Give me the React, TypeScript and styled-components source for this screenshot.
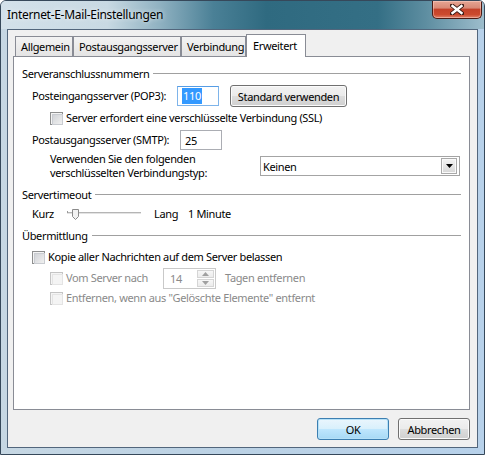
import React from "react";
import styled, { createGlobalStyle } from "styled-components";

const Global = createGlobalStyle`
  html, body { margin: 0; padding: 0; background: #ffffff; }
  body {
    font-family: "Noto Sans", "Liberation Sans", sans-serif;
    font-size: 11px;
    letter-spacing: -0.35px;
    color: #000;
  }
  * { box-sizing: border-box; }
`;

const Window = styled.div`
  width: 485px;
  height: 455px;
  border: 1px solid #36485a;
  border-radius: 6px 6px 0 0;
  overflow: hidden;
  display: flex;
  flex-direction: column;
  background: linear-gradient(to right, #c6d7e3 0%, #bcd2e4 40%, #b7d1ea 100%);
`;

const TitleBar = styled.div`
  height: 28px;
  flex: none;
  display: flex;
  align-items: flex-start;
  justify-content: space-between;
  background: linear-gradient(
    to right,
    #d3e1ea 0%,
    #c8d9e3 22%,
    #8fb1c1 33%,
    #4a8096 44%,
    #2f6a80 55%,
    #346f85 78%,
    #5e8ea1 88%,
    #9dbdcc 100%
  );
`;

const Title = styled.div`
  font-size: 12px;
  line-height: 16px;
  padding: 6px 0 0 6px;
  letter-spacing: -0.3px;
  text-shadow: 0 0 5px rgba(255, 255, 255, 0.9);
`;

const CloseButton = styled.div`
  width: 50px;
  height: 18px;
  margin-right: 2px;
  border: 1px solid #4c1b14;
  border-top: none;
  border-radius: 0 0 5px 5px;
  background: linear-gradient(#e6a593 0%, #d98a77 40%, #c4422a 50%, #cc4a2e 80%, #e0836c 100%);
  box-shadow: inset 0 0 0 1px rgba(255, 220, 210, 0.45);
  display: flex;
  align-items: center;
  justify-content: center;
`;

const FrameBody = styled.div`
  flex: 1;
  display: flex;
  padding: 0 6px 6px 6px;
`;

const Client = styled.div`
  flex: 1;
  display: flex;
  flex-direction: column;
  background: #f0f0f0;
  border: 1px solid #52667c;
  padding: 4px 7px 0 5px;
`;

const TabStrip = styled.div`
  height: 22px;
  display: flex;
  align-items: flex-end;
  padding-left: 2px;
`;

const Tab = styled.div<{ $w: number; $active?: boolean }>`
  width: ${(p) => p.$w}px;
  height: ${(p) => (p.$active ? 23 : 20)}px;
  margin-bottom: ${(p) => (p.$active ? -1 : 0)}px;
  position: relative;
  z-index: ${(p) => (p.$active ? 2 : 0)};
  border: 1px solid #898c95;
  border-bottom: none;
  background: ${(p) => (p.$active ? "#ffffff" : "linear-gradient(#f3f3f3, #e4e4e4)")};
  display: flex;
  align-items: ${(p) => (p.$active ? "flex-start" : "center")};
  padding: ${(p) => (p.$active ? "3px 0 0 6px" : "0 0 0 5px")};
  white-space: nowrap;
`;

const Panel = styled.div`
  height: 354px;
  flex: none;
  background: #ffffff;
  border: 1px solid #898c95;
  padding: 8px 8px 0 8px;
  display: flex;
  flex-direction: column;
  position: relative;
  z-index: 1;
`;

const GroupHeader = styled.div<{ $mt?: number }>`
  height: 16px;
  margin-top: ${(p) => p.$mt ?? 0}px;
  display: flex;
  align-items: center;
  gap: 4px;
  white-space: nowrap;
  &::after {
    content: "";
    flex: 1;
    border-top: 1px solid #a0a0a0;
    margin-top: 1px;
  }
`;

const Row = styled.div<{ $h: number; $indent: number; $mt?: number; $dim?: boolean }>`
  height: ${(p) => p.$h}px;
  margin-top: ${(p) => p.$mt ?? 0}px;
  padding-left: ${(p) => p.$indent}px;
  display: flex;
  align-items: center;
  white-space: nowrap;
  color: ${(p) => (p.$dim ? "#8a8a8a" : "#000")};
`;

const Label = styled.span<{ $w?: number; $ml?: number }>`
  width: ${(p) => (p.$w ? `${p.$w}px` : "auto")};
  flex: none;
  margin-left: ${(p) => p.$ml ?? 0}px;
  line-height: 14px;
`;

const TextBox = styled.div<{ $focus?: boolean }>`
  width: 42px;
  height: 20px;
  flex: none;
  border: 1px solid ${(p) => (p.$focus ? "#7eb4ea" : "#abadb3")};
  border-top-color: ${(p) => (p.$focus ? "#569de5" : "#abadb3")};
  background: #fff;
  display: flex;
  align-items: center;
  padding-left: 4px;
`;

const Selected = styled.span`
  background: #3399ff;
  color: #fff;
  padding: 1px 1px 1px 1px;
  line-height: 14px;
`;

const PushButton = styled.div<{ $w: number; $default?: boolean; $ml?: number }>`
  width: ${(p) => p.$w}px;
  height: 22px;
  flex: none;
  margin-left: ${(p) => p.$ml ?? 0}px;
  border: 1px solid ${(p) => (p.$default ? "#3c7fb1" : "#707070")};
  border-radius: 3px;
  background: ${(p) =>
    p.$default
      ? "linear-gradient(#eaf6fd 0%, #d9f0fc 48%, #bee6fd 52%, #a7d9f5 100%)"
      : "linear-gradient(#f2f2f2 0%, #ebebeb 48%, #dddddd 52%, #cfcfcf 100%)"};
  box-shadow: inset 0 0 0 1px ${(p) => (p.$default ? "#b5e1f8" : "#fbfbfb")};
  display: flex;
  align-items: center;
  justify-content: center;
`;

const Check = styled.span<{ $disabled?: boolean }>`
  width: 13px;
  height: 13px;
  flex: none;
  border: 1px solid ${(p) => (p.$disabled ? "#c4c4c4" : "#8e8f8f")};
  background: #f4f4f4;
  padding: 2px;
  display: inline-block;
  &::before {
    content: "";
    display: block;
    border: 1px solid ${(p) => (p.$disabled ? "#e4e4e4" : "#c9ccd1")};
    background: ${(p) =>
      p.$disabled ? "#f4f4f4" : "linear-gradient(135deg, #d2d4d8 0%, #f0f0f0 100%)"};
    margin: -1px;
    width: 9px;
    height: 9px;
  }
`;

const CheckRow = styled(Row)`
  gap: 3px;
`;

const Select = styled.div`
  width: 200px;
  height: 20px;
  flex: none;
  border: 1px solid #a4a4a4;
  background: #fff;
  display: flex;
  align-items: center;
  justify-content: space-between;
  padding: 0 2px 0 2px;
`;

const DropButton = styled.div`
  width: 16px;
  height: 16px;
  border: 1px solid #a9a9a9;
  background: linear-gradient(#f4f4f4 0%, #e6e6e6 50%, #d6d6d6 100%);
  box-shadow: inset 0 0 0 1px #fafafa;
  display: flex;
  align-items: center;
  justify-content: center;
`;

const SpinBox = styled.div`
  width: 53px;
  height: 21px;
  flex: none;
  border: 1px solid #c9c9c9;
  background: #fff;
  display: flex;
  align-items: center;
  justify-content: space-between;
  padding: 1px 1px 1px 6px;
  color: #8a8a8a;
`;

const SpinButtons = styled.div`
  width: 17px;
  height: 100%;
  display: flex;
  flex-direction: column;
  gap: 1px;
`;

const SpinPart = styled.div`
  flex: 1;
  border: 1px solid #d5d5d5;
  background: linear-gradient(#f7f7f7, #ececec);
  display: flex;
  align-items: center;
  justify-content: center;
`;

const SliderBox = styled.svg`
  flex: none;
  display: block;
`;

const ButtonRow = styled.div`
  display: flex;
  justify-content: flex-end;
  gap: 9px;
  margin-top: 8px;
`;

const Arrow = ({ up, color = "#000" }: { up?: boolean; color?: string }) => (
  <svg width="7" height="4" viewBox="0 0 7 4">
    <path d={up ? "M3.5 0 L7 4 L0 4 Z" : "M0 0 L7 0 L3.5 4 Z"} fill={color} />
  </svg>
);

export default function App() {
  return (
    <>
      <Global />
      <Window>
        <TitleBar>
          <Title>Internet-E-Mail-Einstellungen</Title>
          <CloseButton>
            <svg width="14" height="11" viewBox="0 0 14 11">
              <path
                d="M2 1.5 L12 9.5 M12 1.5 L2 9.5"
                stroke="#3a1a14"
                strokeWidth="4.2"
                strokeLinecap="square"
              />
              <path
                d="M2.5 2 L11.5 9 M11.5 2 L2.5 9"
                stroke="#ffffff"
                strokeWidth="2.4"
                strokeLinecap="square"
              />
            </svg>
          </CloseButton>
        </TitleBar>
        <FrameBody>
          <Client>
            <TabStrip>
              <Tab $w={58}>Allgemein</Tab>
              <Tab $w={108}>Postausgangsserver</Tab>
              <Tab $w={65}>Verbindung</Tab>
              <Tab $w={60} $active>
                Erweitert
              </Tab>
            </TabStrip>
            <Panel>
              <GroupHeader>Serveranschlussnummern</GroupHeader>
              <Row $h={22} $indent={10} $mt={4}>
                <Label $w={145}>Posteingangsserver (POP3):</Label>
                <TextBox $focus>
                  <Selected>110</Selected>
                </TextBox>
                <PushButton $w={117} $ml={11}>
                  Standard verwenden
                </PushButton>
              </Row>
              <CheckRow $h={22} $indent={28}>
                <Check />
                <Label>Server erfordert eine verschlüsselte Verbindung (SSL)</Label>
              </CheckRow>
              <Row $h={22} $indent={10}>
                <Label $w={148}>Postausgangsserver (SMTP):</Label>
                <TextBox>25</TextBox>
              </Row>
              <Row $h={28} $indent={28} $mt={1}>
                <Label $w={210}>
                  Verwenden Sie den folgenden
                  <br />
                  verschlüsselten Verbindungstyp:
                </Label>
                <Select>
                  <span>Keinen</span>
                  <DropButton>
                    <Arrow />
                  </DropButton>
                </Select>
              </Row>
              <GroupHeader $mt={6}>Servertimeout</GroupHeader>
              <Row $h={22} $indent={10} $mt={1}>
                <Label $w={35}>Kurz</Label>
                <SliderBox width="74" height="22" viewBox="0 0 74 22">
                  <rect x="0" y="9" width="74" height="1" fill="#b5b5b5" />
                  <rect x="0" y="10" width="74" height="1" fill="#e3e3e3" />
                  <path d="M0.5 8 L0.5 10" stroke="#9a9a9a" />
                  <path
                    d="M5.5 6.5 L11.5 6.5 L11.5 13.5 L8.5 16.5 L5.5 13.5 Z"
                    fill="#f2f2f2"
                    stroke="#8a8a8a"
                  />
                </SliderBox>
                <Label $w={34} $ml={13}>
                  Lang
                </Label>
                <Label>1 Minute</Label>
              </Row>
              <GroupHeader $mt={2}>Übermittlung</GroupHeader>
              <CheckRow $h={22} $indent={10} $mt={3}>
                <Check />
                <Label>Kopie aller Nachrichten auf dem Server belassen</Label>
              </CheckRow>
              <CheckRow $h={20} $indent={28} $dim>
                <Check $disabled />
                <Label $w={94}>Vom Server nach</Label>
                <SpinBox>
                  <span>14</span>
                  <SpinButtons>
                    <SpinPart>
                      <Arrow up color="#a0a0a0" />
                    </SpinPart>
                    <SpinPart>
                      <Arrow color="#a0a0a0" />
                    </SpinPart>
                  </SpinButtons>
                </SpinBox>
                <Label $ml={6}>Tagen entfernen</Label>
              </CheckRow>
              <CheckRow $h={20} $indent={28} $dim>
                <Check $disabled />
                <Label>Entfernen, wenn aus "Gelöschte Elemente" entfernt</Label>
              </CheckRow>
            </Panel>
            <ButtonRow>
              <PushButton $w={72} $default>
                OK
              </PushButton>
              <PushButton $w={72}>Abbrechen</PushButton>
            </ButtonRow>
          </Client>
        </FrameBody>
      </Window>
    </>
  );
}
